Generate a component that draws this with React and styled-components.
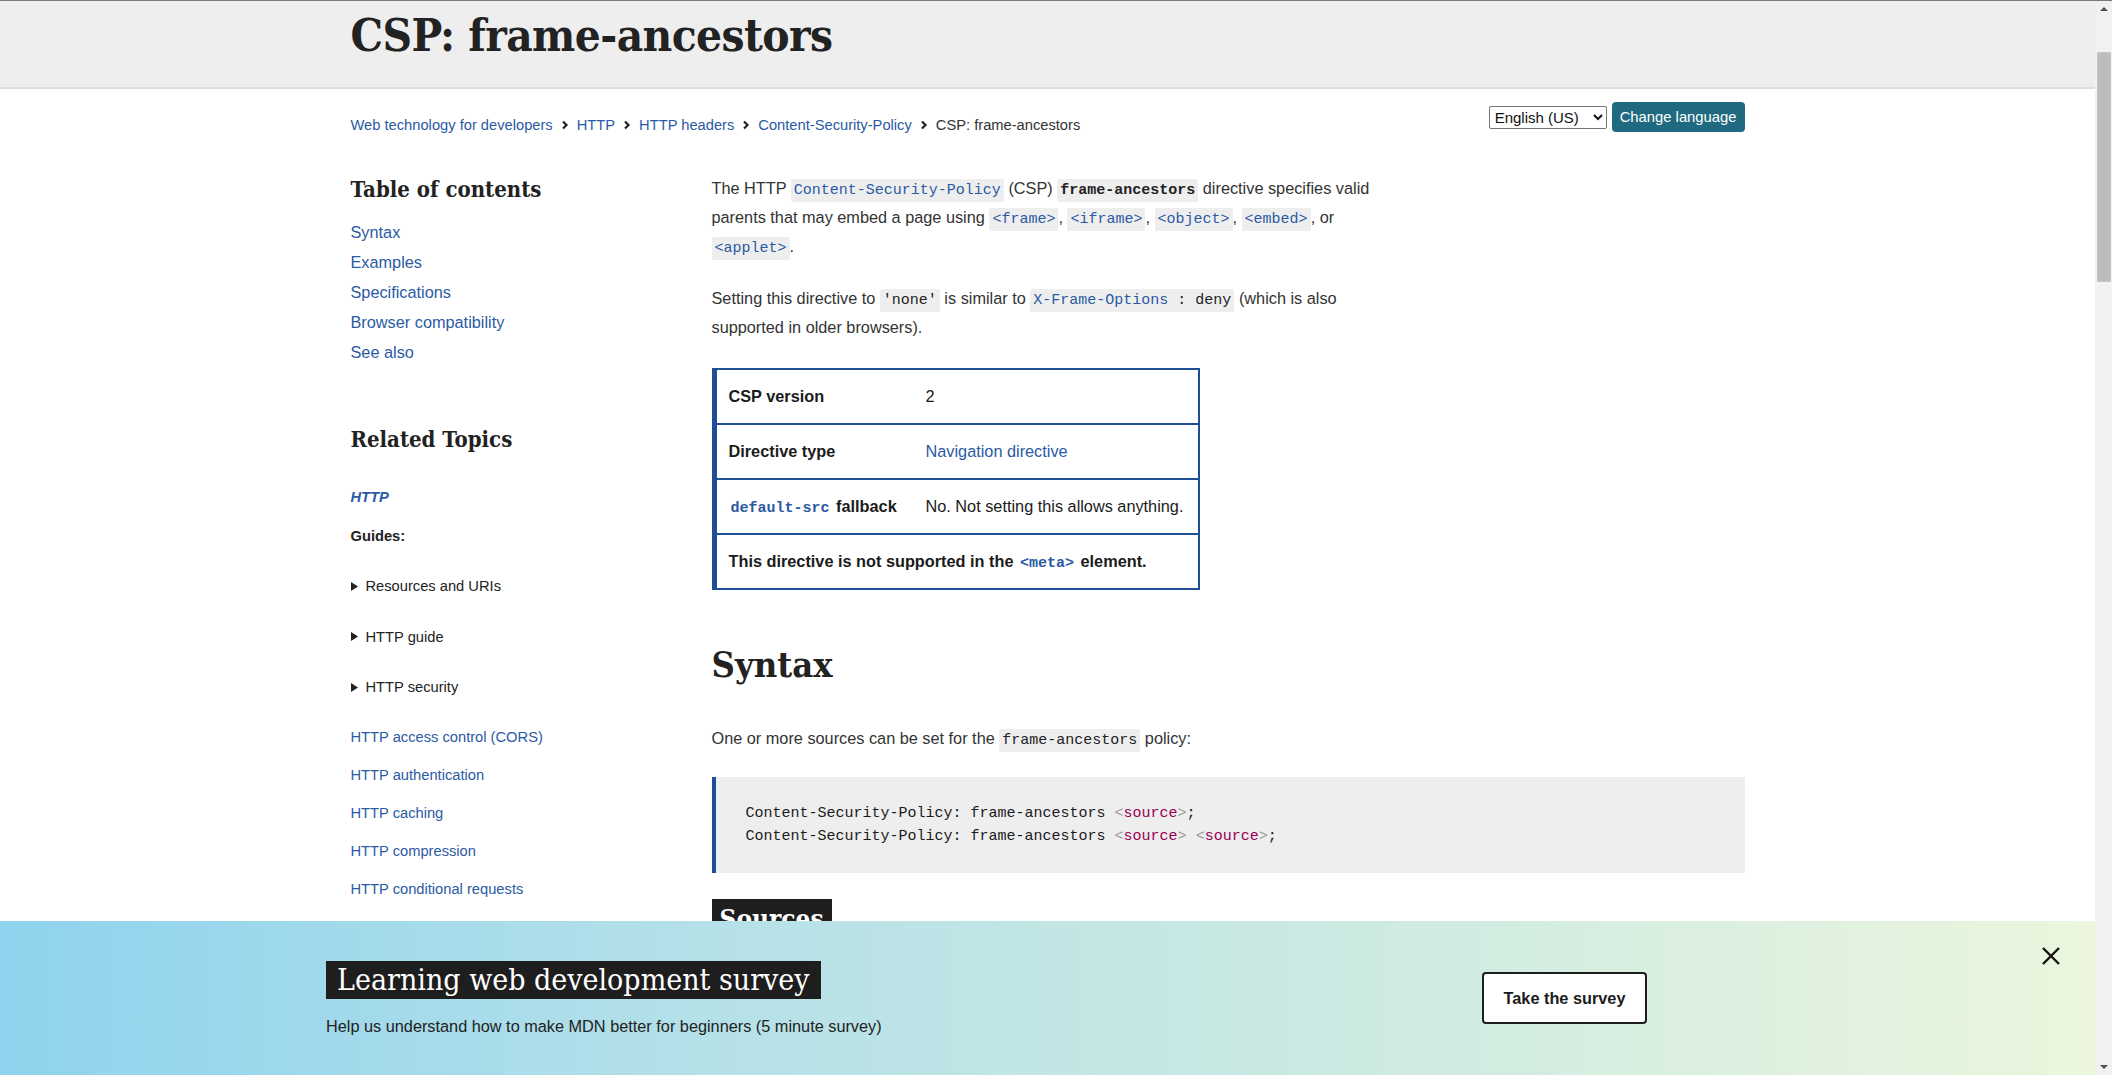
import styled, { createGlobalStyle } from 'styled-components';

const GlobalStyle = createGlobalStyle`
  html, body {
    margin: 0;
    padding: 0;
    height: 100%;
    overflow: hidden;
  }
  body {
    font-family: "Liberation Sans", Arial, sans-serif;
    color: #333;
    background: #fff;
  }
  #root {
    height: 100%;
  }
`;

const BLUE = '#2b5aa4';
const NAVY = '#1d4e96';

const toc = ['Syntax', 'Examples', 'Specifications', 'Browser compatibility', 'See also'];
const guides = ['Resources and URIs', 'HTTP guide', 'HTTP security'];
const related = [
  'HTTP access control (CORS)',
  'HTTP authentication',
  'HTTP caching',
  'HTTP compression',
  'HTTP conditional requests',
  'HTTP content negotiation',
];
const crumbs = ['Web technology for developers', 'HTTP', 'HTTP headers', 'Content-Security-Policy'];

const Chevron = () => (
  <svg width="8" height="10" viewBox="0 0 8 10">
    <path d="M2 1.5l3.5 3.5L2 8.5" fill="none" stroke="#222" strokeWidth="2.2" />
  </svg>
);

const Triangle = () => (
  <svg width="7" height="9" viewBox="0 0 7 9">
    <path d="M0 0l7 4.5L0 9z" fill="#222" />
  </svg>
);

const Source = () => (
  <>
    <Punct>&lt;</Punct>
    <Keyword>source</Keyword>
    <Punct>&gt;</Punct>
  </>
);

const App = () => {
  return (
    <Frame>
      <GlobalStyle />
      <Viewport>
        <TitleBand>
          <Container>
            <Title>CSP: frame-ancestors</Title>
          </Container>
        </TitleBand>

        <Container>
          <TopRow>
            <Breadcrumbs>
              {crumbs.map((c) => (
                <Crumb key={c}>
                  <CrumbLink href="#">{c}</CrumbLink>
                  <Chevron />
                </Crumb>
              ))}
              <CurrentCrumb>CSP: frame-ancestors</CurrentCrumb>
            </Breadcrumbs>
            <LangForm>
              <LangSelect defaultValue="en">
                <option value="en">English (US)</option>
              </LangSelect>
              <LangButton>Change language</LangButton>
            </LangForm>
          </TopRow>

          <Columns>
            <Sidebar>
              <SideHeading>Table of contents</SideHeading>
              <TocList>
                {toc.map((t) => (
                  <li key={t}>
                    <TocLink href="#">{t}</TocLink>
                  </li>
                ))}
              </TocList>

              <SideHeading $gap={57}>Related Topics</SideHeading>
              <SectionLink href="#">HTTP</SectionLink>
              <GroupLabel>Guides:</GroupLabel>
              <GuideList>
                {guides.map((g) => (
                  <GuideItem key={g}>
                    <Triangle />
                    {g}
                  </GuideItem>
                ))}
              </GuideList>
              <RelatedList>
                {related.map((r) => (
                  <li key={r}>
                    <RelatedLink href="#">{r}</RelatedLink>
                  </li>
                ))}
              </RelatedList>
            </Sidebar>

            <Article>
              <Para>
                The HTTP <Code $link>Content-Security-Policy</Code> (CSP) <Code $bold>frame-ancestors</Code> directive
                specifies valid parents that may embed a page using <Code $link>&lt;frame&gt;</Code>,{' '}
                <Code $link>&lt;iframe&gt;</Code>, <Code $link>&lt;object&gt;</Code>, <Code $link>&lt;embed&gt;</Code>, or{' '}
                <Code $link>&lt;applet&gt;</Code>.
              </Para>
              <Para $after={26}>
                Setting this directive to <Code>'none'</Code> is similar to{' '}
                <Code>
                  <CodeLink>X-Frame-Options</CodeLink> : deny
                </Code>{' '}
                (which is also supported in older browsers).
              </Para>

              <InfoTable>
                <InfoRow>
                  <InfoHead>CSP version</InfoHead>
                  <InfoCell>2</InfoCell>
                </InfoRow>
                <InfoRow>
                  <InfoHead>Directive type</InfoHead>
                  <InfoCell>
                    <PlainLink href="#">Navigation directive</PlainLink>
                  </InfoCell>
                </InfoRow>
                <InfoRow>
                  <InfoHead>
                    <TableCode>default-src</TableCode> fallback
                  </InfoHead>
                  <InfoCell>No. Not setting this allows anything.</InfoCell>
                </InfoRow>
                <InfoRow $span>
                  <InfoHead>
                    This directive is not supported in the <TableCode>&lt;meta&gt;</TableCode> element.
                  </InfoHead>
                </InfoRow>
              </InfoTable>

              <SectionTitle>Syntax</SectionTitle>
              <Para $after={24}>
                One or more sources can be set for the <Code>frame-ancestors</Code> policy:
              </Para>
              <CodeBlock>
                <div>
                  Content-Security-Policy: frame-ancestors <Source />;
                </div>
                <div>
                  Content-Security-Policy: frame-ancestors <Source /> <Source />;
                </div>
              </CodeBlock>
              <SubTitle>Sources</SubTitle>
            </Article>
          </Columns>
        </Container>

        <Banner>
          <BannerText>
            <BannerTitle>Learning web development survey</BannerTitle>
            <BannerSub>Help us understand how to make MDN better for beginners (5 minute survey)</BannerSub>
          </BannerText>
          <SurveyButton>Take the survey</SurveyButton>
          <Spacer />
          <CloseButton aria-label="Close">
            <svg width="20" height="20" viewBox="0 0 20 20">
              <path d="M2 2l16 16M18 2L2 18" stroke="#111" strokeWidth="2.4" />
            </svg>
          </CloseButton>
        </Banner>
      </Viewport>

      <Scrollbar>
        <ArrowUp />
        <Thumb />
        <Spacer />
        <ArrowDown />
      </Scrollbar>
    </Frame>
  );
};

const Frame = styled.div`
  display: flex;
  height: 100vh;
  box-sizing: border-box;
  border-top: 1px solid #7a7a7a;
`;

const Viewport = styled.div`
  flex: 1;
  min-width: 0;
  position: relative;
  overflow: hidden;
`;

const Scrollbar = styled.div`
  width: 17px;
  flex-shrink: 0;
  background: #f1f1f1;
  display: flex;
  flex-direction: column;
  align-items: center;
`;

const ArrowUp = styled.div`
  margin-top: 6px;
  width: 0;
  height: 0;
  border-left: 4px solid transparent;
  border-right: 4px solid transparent;
  border-bottom: 4px solid #505050;
`;

const ArrowDown = styled.div`
  margin-bottom: 6px;
  width: 0;
  height: 0;
  border-left: 4px solid transparent;
  border-right: 4px solid transparent;
  border-top: 4px solid #505050;
`;

const Thumb = styled.div`
  margin-top: 41px;
  width: 14px;
  height: 230px;
  box-sizing: border-box;
  background: #bdbdbd;
  border: 1px solid #c8c8c8;
`;

const Spacer = styled.div`
  flex: 1;
`;

const Container = styled.div`
  width: 1394px;
  margin: 0 auto;
`;

const TitleBand = styled.header`
  height: 86px;
  background: #eeeeee;
  border-bottom: 2px solid #dedede;
`;

const Title = styled.h1`
  margin: 0;
  padding-top: 8px;
  font-family: "DejaVu Serif", Georgia, serif;
  font-stretch: condensed;
  font-weight: 700;
  font-size: 45.5px;
  line-height: 52px;
  letter-spacing: -0.6px;
  color: #222;
`;

const TopRow = styled.div`
  display: flex;
  justify-content: space-between;
  align-items: flex-start;
  padding-top: 13px;
`;

const Breadcrumbs = styled.nav`
  display: flex;
  align-items: center;
  padding-top: 13px;
  font-size: 14.7px;
  line-height: 20px;
`;

const Crumb = styled.span`
  display: inline-flex;
  align-items: center;
  gap: 8px;
  margin-right: 8px;
`;

const CrumbLink = styled.a`
  color: ${BLUE};
  text-decoration: none;
`;

const CurrentCrumb = styled.span`
  color: #333;
`;

const LangForm = styled.div`
  display: flex;
  align-items: center;
  gap: 5px;
`;

const LangSelect = styled.select`
  height: 23px;
  width: 118px;
  font-family: "Liberation Sans", Arial, sans-serif;
  font-size: 15px;
  color: #111;
  background: #fff;
  border: 1px solid #767676;
  border-radius: 2px;
  padding: 0 1px;
`;

const LangButton = styled.button`
  height: 30px;
  padding: 0 8px;
  border: 0;
  border-radius: 4px;
  background: #1f6a80;
  color: #fff;
  font-family: "Liberation Sans", Arial, sans-serif;
  font-size: 14.8px;
`;

const Columns = styled.div`
  display: grid;
  grid-template-columns: 330px 1fr;
  column-gap: 31px;
  margin-top: 39px;
`;

const Sidebar = styled.aside`
  display: flex;
  flex-direction: column;
  align-items: flex-start;
`;

const SideHeading = styled.h2`
  margin: ${(p) => p.$gap || 0}px 0 0;
  font-family: "DejaVu Serif", Georgia, serif;
  font-stretch: condensed;
  font-weight: 700;
  font-size: 22px;
  line-height: 30px;
  color: #222;
`;

const TocList = styled.ul`
  list-style: none;
  margin: 13px 0 0;
  padding: 0;
  font-size: 16.3px;
  line-height: 30px;
`;

const TocLink = styled.a`
  color: ${BLUE};
  text-decoration: none;
`;

const SectionLink = styled.a`
  margin-top: 33px;
  font-size: 14.7px;
  line-height: 20px;
  font-weight: 700;
  font-style: italic;
  color: ${BLUE};
  text-decoration: none;
`;

const GroupLabel = styled.div`
  margin-top: 19px;
  font-size: 14.7px;
  line-height: 20px;
  font-weight: 700;
  color: #222;
`;

const GuideList = styled.div`
  margin-top: 30px;
  display: flex;
  flex-direction: column;
  gap: 30.5px;
`;

const GuideItem = styled.div`
  display: flex;
  align-items: center;
  gap: 8px;
  font-size: 14.7px;
  line-height: 20px;
  color: #222;
`;

const RelatedList = styled.ul`
  list-style: none;
  margin: 30px 0 0;
  padding: 0;
  display: flex;
  flex-direction: column;
  gap: 18px;
  font-size: 14.7px;
  line-height: 20px;
`;

const RelatedLink = styled.a`
  color: ${BLUE};
  text-decoration: none;
`;

const Article = styled.main`
  min-width: 0;
`;

const Para = styled.p`
  max-width: 680px;
  margin: 0 0 ${(p) => p.$after || 23}px;
  font-size: 16.3px;
  line-height: 29px;
  color: #333;
`;

const Code = styled.code`
  font-family: "Liberation Mono", "DejaVu Sans Mono", monospace;
  font-size: 15px;
  line-height: 1;
  padding: 3px 3px;
  background: #eeeeee;
  border-radius: 2px;
  color: ${(p) => (p.$link ? BLUE : '#222')};
  font-weight: ${(p) => (p.$bold ? 700 : 400)};
`;

const CodeLink = styled.span`
  color: ${BLUE};
`;

const PlainLink = styled.a`
  color: ${BLUE};
  text-decoration: none;
`;

const InfoTable = styled.div`
  width: 488px;
  box-sizing: border-box;
  border: 2px solid ${NAVY};
  border-left-width: 5px;
`;

const InfoRow = styled.div`
  display: grid;
  grid-template-columns: ${(p) => (p.$span ? '1fr' : '195px 1fr')};
  align-items: center;
  height: 53px;
  & + & {
    border-top: 2px solid ${NAVY};
  }
`;

const InfoHead = styled.div`
  padding: 0 12px;
  font-size: 16.3px;
  font-weight: 700;
  color: #1b1b1b;
`;

const InfoCell = styled.div`
  padding: 0 14px;
  font-size: 16.3px;
  color: #1b1b1b;
`;

const TableCode = styled.code`
  font-family: "Liberation Mono", "DejaVu Sans Mono", monospace;
  font-size: 15px;
  line-height: 1;
  font-weight: 700;
  color: ${BLUE};
  padding: 0 2px;
`;

const SectionTitle = styled.h2`
  margin: 51px 0 37px;
  font-family: "DejaVu Serif", Georgia, serif;
  font-stretch: condensed;
  font-weight: 700;
  font-size: 36px;
  line-height: 46px;
  color: #222;
`;

const CodeBlock = styled.pre`
  margin: 0;
  padding: 25px 30px;
  background: #eeeeee;
  border-left: 4px solid ${NAVY};
  font-family: "Liberation Mono", "DejaVu Sans Mono", monospace;
  font-size: 15px;
  line-height: 23px;
  color: #1b1b1b;
`;

const Punct = styled.span`
  color: #999;
`;

const Keyword = styled.span`
  color: #990055;
`;

const SubTitle = styled.h3`
  display: inline-block;
  margin: 26px 0 0;
  padding: 0 8px;
  background: #1f1f1f;
  color: #fff;
  font-family: "DejaVu Serif", Georgia, serif;
  font-stretch: condensed;
  font-weight: 700;
  font-size: 26px;
  line-height: 40px;
`;

const Banner = styled.aside`
  position: absolute;
  left: 0;
  right: 0;
  bottom: 0;
  height: 154px;
  box-sizing: border-box;
  display: flex;
  align-items: center;
  padding: 0 34px 0 326px;
  background: linear-gradient(90deg, #8fd3ee 0%, #b6e1e8 35%, #cdeae2 65%, #ebf6dd 100%);
`;

const BannerText = styled.div`
  flex: 0 0 1156px;
  display: flex;
  flex-direction: column;
  align-items: flex-start;
`;

const BannerTitle = styled.h2`
  margin: 0;
  padding: 0 11px;
  height: 38px;
  background: #1e1e1e;
  color: #fff;
  font-family: "DejaVu Serif", Georgia, serif;
  font-stretch: condensed;
  font-weight: 400;
  font-size: 30px;
  line-height: 38px;
`;

const BannerSub = styled.p`
  margin: 18px 0 0;
  font-size: 16.3px;
  line-height: 18px;
  color: #222;
`;

const SurveyButton = styled.button`
  width: 165px;
  height: 52px;
  background: #fff;
  border: 2px solid #1e1e1e;
  border-radius: 4px;
  font-family: "Liberation Sans", Arial, sans-serif;
  font-size: 16.3px;
  font-weight: 700;
  color: #1b1b1b;
`;

const CloseButton = styled.button`
  align-self: flex-start;
  margin-top: 25px;
  padding: 0;
  border: 0;
  background: none;
  width: 20px;
  height: 20px;
`;

export default App;
